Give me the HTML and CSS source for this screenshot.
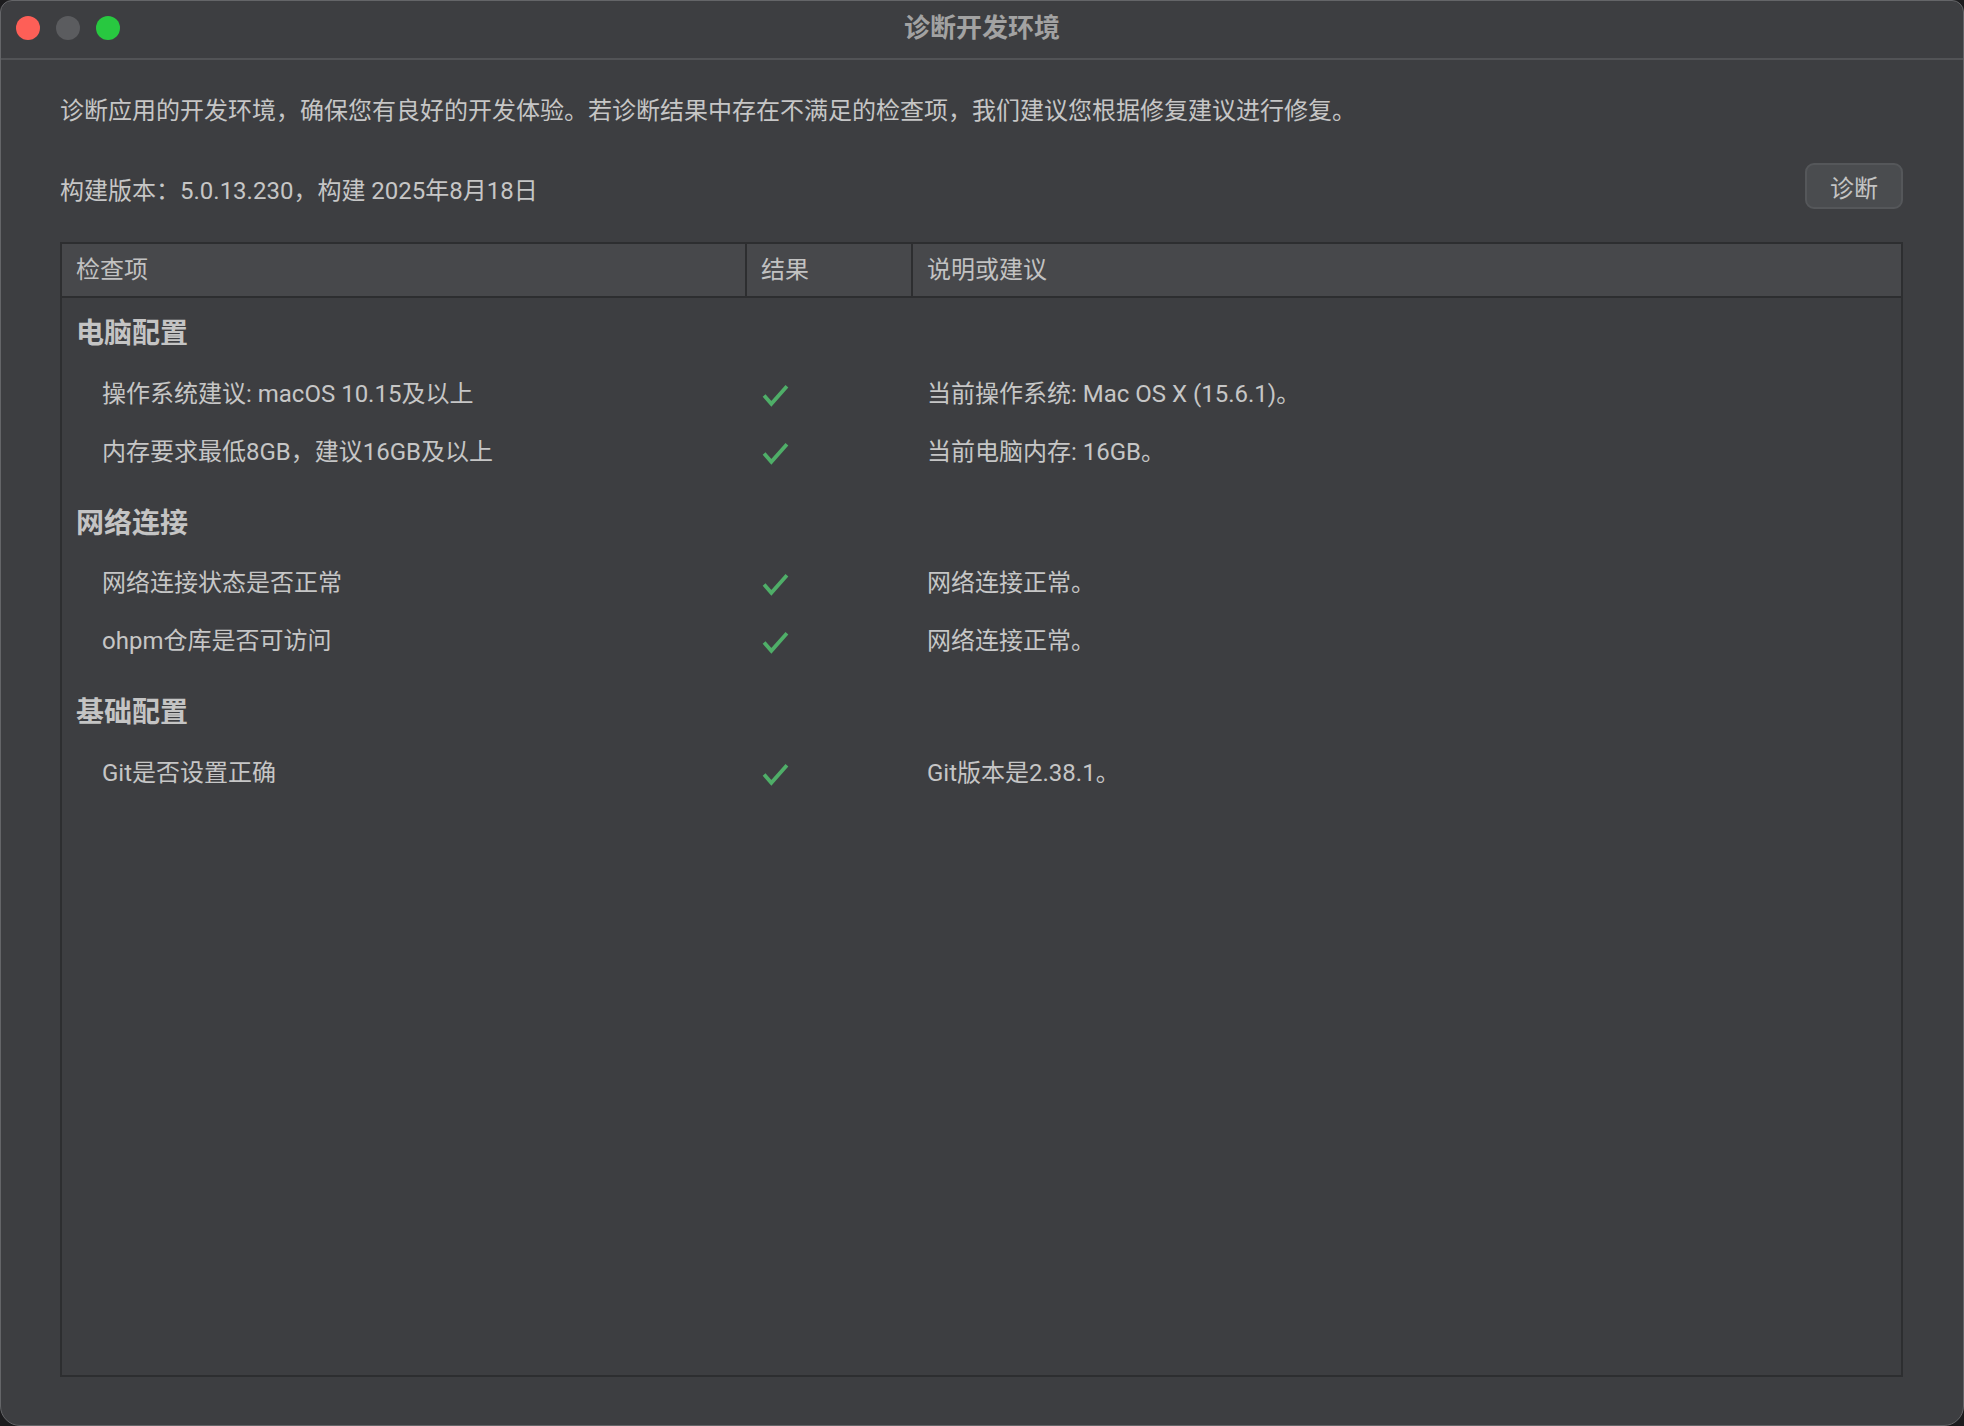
FILE: index.html
```html
<!DOCTYPE html>
<html lang="zh-CN">
<head>
    <meta charset="UTF-8">
    <title>诊断开发环境</title>
    <link rel="stylesheet" href="styles.css">
</head>
<body>

    <div class="window">
        <div class="titlebar">
            <div class="lights">
                <span class="light red"></span>
                <span class="light gray"></span>
                <span class="light green"></span>
            </div>
            <div class="title">诊断开发环境</div>
            <div></div>
        </div>

        <div class="content">
            <p class="desc">诊断应用的开发环境，确保您有良好的开发体验。若诊断结果中存在不满足的检查项，我们建议您根据修复建议进行修复。</p>

            <div class="build-row">
                <span class="build">构建版本：5.0.13.230，构建 2025年8月18日</span>
                <button class="button">诊断</button>
            </div>

            <div class="table">
                <div class="thead">
                    <div class="th">检查项</div>
                    <div class="th">结果</div>
                    <div class="th">说明或建议</div>
                </div>

                <div class="tbody">
                    <div class="group">电脑配置</div>
                    <div class="row">
                        <div class="cell name">操作系统建议: macOS 10.15及以上</div>
                        <div class="cell result"><svg class="check" viewBox="0 0 26 22"><polyline points="2,11 9,19 24,2"/></svg></div>
                        <div class="cell note">当前操作系统: Mac OS X (15.6.1)。</div>
                    </div>
                    <div class="row">
                        <div class="cell name">内存要求最低8GB，建议16GB及以上</div>
                        <div class="cell result"><svg class="check" viewBox="0 0 26 22"><polyline points="2,11 9,19 24,2"/></svg></div>
                        <div class="cell note">当前电脑内存: 16GB。</div>
                    </div>

                    <div class="group">网络连接</div>
                    <div class="row">
                        <div class="cell name">网络连接状态是否正常</div>
                        <div class="cell result"><svg class="check" viewBox="0 0 26 22"><polyline points="2,11 9,19 24,2"/></svg></div>
                        <div class="cell note">网络连接正常。</div>
                    </div>
                    <div class="row">
                        <div class="cell name">ohpm仓库是否可访问</div>
                        <div class="cell result"><svg class="check" viewBox="0 0 26 22"><polyline points="2,11 9,19 24,2"/></svg></div>
                        <div class="cell note">网络连接正常。</div>
                    </div>

                    <div class="group">基础配置</div>
                    <div class="row">
                        <div class="cell name">Git是否设置正确</div>
                        <div class="cell result"><svg class="check" viewBox="0 0 26 22"><polyline points="2,11 9,19 24,2"/></svg></div>
                        <div class="cell note">Git版本是2.38.1。</div>
                    </div>
                </div>
            </div>
        </div>
    </div>

</body>
</html>
```

FILE: styles.css
```css
/* Dark mac-style dialog */
body {
    margin: 0;
    background: #1c1c1e;
    font-family: "Roboto", "Noto Sans CJK SC", sans-serif;
    color: #c6c6c6;
}

.window {
    width: 1964px;
    height: 1426px;
    box-sizing: border-box;
    border: 1px solid #646568;
    border-radius: 12px 12px 20px 20px;
    background: #3d3e41;
    display: flex;
    flex-direction: column;
    overflow: hidden;
}

.titlebar {
    height: 57px;
    border-bottom: 2px solid #525356;
    display: grid;
    grid-template-columns: 1fr auto 1fr;
    align-items: center;
}

.lights {
    display: flex;
    gap: 16px;
    padding-left: 15px;
    margin-top: -3px;
}

.light {
    width: 24px;
    height: 24px;
    border-radius: 50%;
}

.red { background: #fe5f57; }
.gray { background: #5b5c5f; }
.green { background: #28c840; }

.title {
    font-size: 26px;
    font-weight: bold;
    color: #a2a2a2;
    margin-top: -8px;
}

.content {
    flex: 1;
    display: flex;
    flex-direction: column;
    padding: 0 60px 48px 59px;
}

.desc {
    margin: 36px 0 0;
    font-size: 24px;
    line-height: 30px;
}

.build-row {
    display: flex;
    justify-content: space-between;
    align-items: center;
    margin-top: 37px;
    height: 46px;
}

.build {
    font-size: 24px;
    line-height: 30px;
    margin-top: 10px;
}

.button {
    width: 98px;
    height: 46px;
    border: 2px solid #55575a;
    border-radius: 9px;
    background: #4a4c4f;
    color: #c4c4c4;
    font-family: inherit;
    font-size: 24px;
    padding: 0;
}

/* table */
.table {
    flex: 1;
    margin-top: 33px;
    border: 2px solid #2d2e30;
    display: flex;
    flex-direction: column;
}

.thead, .row {
    display: grid;
    grid-template-columns: 683px 166px 1fr;
}

.thead {
    height: 52px;
    background: #47484b;
    border-bottom: 2px solid #2d2e30;
}

.th {
    font-size: 24px;
    line-height: 52px;
    padding-left: 14px;
    color: #c2c2c2;
}

.th + .th {
    border-left: 2px solid #2d2e30;
}

.group {
    font-size: 28px;
    font-weight: bold;
    line-height: 36px;
    padding: 25px 0 12.5px 14px;
    color: #c4c4c4;
}

.group:first-child {
    padding-top: 18px;
}

.row {
    height: 58px;
    align-items: center;
}

.cell {
    font-size: 24px;
    line-height: 30px;
}

.name {
    padding-left: 40px;
}

.result {
    padding-left: 17px;
    display: flex;
    align-items: center;
}

.note {
    padding-left: 16px;
}

.check {
    width: 27px;
    height: 23px;
    margin-top: 3px;
}

.check polyline {
    fill: none;
    stroke: #4fae68;
    stroke-width: 3.6;
}
```
